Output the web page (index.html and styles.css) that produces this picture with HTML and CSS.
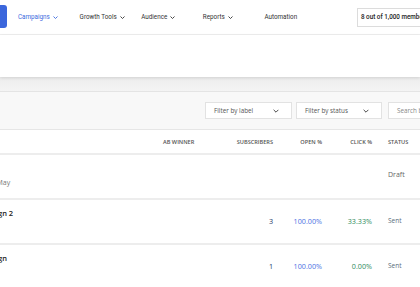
FILE: index.html
```html
<!DOCTYPE html>
<html lang="en">
<head>
<meta charset="utf-8">
<title>Campaigns</title>
<link rel="stylesheet" href="styles.css">
</head>
<body>
<header class="topnav">
  <div class="logo"></div>
  <nav class="menu">
    <a class="item active">Campaigns <svg class="caret" viewBox="0 0 10 6" width="5" height="3"><path d="M1 1l4 4 4-4" fill="none" stroke="currentColor" stroke-width="1.8"/></svg></a>
    <a class="item">Growth Tools <svg class="caret" viewBox="0 0 10 6" width="5" height="3"><path d="M1 1l4 4 4-4" fill="none" stroke="currentColor" stroke-width="1.8"/></svg></a>
    <a class="item">Audience <svg class="caret" viewBox="0 0 10 6" width="5" height="3"><path d="M1 1l4 4 4-4" fill="none" stroke="currentColor" stroke-width="1.8"/></svg></a>
    <a class="item">Reports <svg class="caret" viewBox="0 0 10 6" width="5" height="3"><path d="M1 1l4 4 4-4" fill="none" stroke="currentColor" stroke-width="1.8"/></svg></a>
    <a class="item">Automation</a>
  </nav>
  <div class="quota">8 out of 1,000 members</div>
</header>

<section class="hero"></section>
<div class="band"></div>

<div class="toolbar">
  <div class="select">Filter by label <svg class="chev" viewBox="0 0 10 6" width="6" height="4"><path d="M1 1l4 4 4-4" fill="none" stroke="#444" stroke-width="1.6"/></svg></div>
  <div class="select">Filter by status <svg class="chev" viewBox="0 0 10 6" width="6" height="4"><path d="M1 1l4 4 4-4" fill="none" stroke="#444" stroke-width="1.6"/></svg></div>
  <div class="search">Search by name</div>
</div>

<div class="table">
  <div class="row head">
    <div class="c name"></div>
    <div class="c ab">AB WINNER</div>
    <div class="c num">SUBSCRIBERS</div>
    <div class="c num">OPEN %</div>
    <div class="c num">CLICK %</div>
    <div class="c status">STATUS</div>
  </div>
  <div class="row first">
    <div class="c name"><div class="nm"><div class="title">Newsletter</div><div class="sub">Last edited 14 May</div></div></div>
    <div class="c ab"></div>
    <div class="c num"></div>
    <div class="c num"></div>
    <div class="c num"></div>
    <div class="c status draft">Draft</div>
  </div>
  <div class="row">
    <div class="c name"><div class="nm"><div class="title">Regular campaign 2</div><div class="sub">12 May</div></div></div>
    <div class="c ab"></div>
    <div class="c num subs">3</div>
    <div class="c num open">100.00%</div>
    <div class="c num click">33.33%</div>
    <div class="c status sent">Sent</div>
  </div>
  <div class="row">
    <div class="c name"><div class="nm"><div class="title">Regular campaign</div><div class="sub">10 May</div></div></div>
    <div class="c ab"></div>
    <div class="c num subs">1</div>
    <div class="c num open">100.00%</div>
    <div class="c num click">0.00%</div>
    <div class="c status sent">Sent</div>
  </div>
</div>
</body>
</html>
```

FILE: styles.css
```css
html, body {
  margin: 0;
  padding: 0;
}
body {
  width: 420px;
  height: 287px;
  overflow: hidden;
  background: #ffffff;
  font-family: "Open Sans", "Noto Sans", sans-serif;
  color: #333;
}

/* top navigation */
.topnav {
  display: flex;
  align-items: center;
  height: 34px;
  border-bottom: 1px solid #efefef;
  font-family: Roboto, "Liberation Sans", sans-serif;
}
.logo {
  flex: 0 0 auto;
  width: 30px;
  height: 23px;
  margin-left: -23px;
  margin-top: -1px;
  border-radius: 3px;
  background: #3b66dc;
}
.menu {
  display: flex;
  margin-left: 11px;
}
.item {
  flex: 0 0 61.6px;
  font-size: 6.3px;
  color: #333;
  white-space: nowrap;
  display: flex;
  align-items: center;
}
.item.active {
  color: #3d6be0;
}
.caret {
  margin-left: 3px;
  display: block;
}
.quota {
  flex: 0 0 auto;
  margin-left: 31px;
  height: 17px;
  padding: 0 3px;
  border: 1px solid #dcdcdc;
  border-right: none;
  display: flex;
  align-items: center;
  font-size: 6.3px;
  font-weight: 500;
  color: #222;
  white-space: nowrap;
}

/* hero & band */
.hero {
  height: 42px;
  background: #fff;
  position: relative;
  box-shadow: 0 1px 3px rgba(0,0,0,0.12);
}
.band {
  height: 14px;
  background: linear-gradient(#ededed, #f4f4f4);
  border-bottom: 1px solid #e4e4e4;
}

/* toolbar */
.toolbar {
  height: 37px;
  background: #f8f8f8;
  border-bottom: 1px solid #e6e6e6;
  display: flex;
  align-items: center;
  padding-left: 205px;
  gap: 4px;
  white-space: nowrap;
}
.select, .search {
  box-sizing: border-box;
  height: 17px;
  background: #fff;
  border: 1px solid #e2e2e2;
  display: flex;
  align-items: center;
  font-size: 6.3px;
  color: #555;
}
.select {
  flex: 0 0 87px;
  padding: 0 12px 0 8px;
  justify-content: space-between;
}
.select + .select {
  flex-basis: 86px;
}
.search {
  flex: 0 0 90px;
  margin-left: 2px;
  padding-left: 8px;
  color: #888;
}
.chev {
  display: block;
}

/* table */
.row {
  display: grid;
  grid-template-columns: 160px 40px 73px 49px 50px 1fr;
  height: 43px;
  border-bottom: 2px solid #ededed;
  align-items: center;
  white-space: nowrap;
}
.row.head {
  height: 23px;
  font-size: 5.6px;
  font-weight: 600;
  color: #555;
}
.c.ab {
  padding-left: 3px;
}
.c.num {
  text-align: right;
}
.c.status {
  padding-left: 16px;
}
.nm {
  margin-left: -58px;
  margin-top: -4px;
}
.row.first .nm {
  margin-left: -51px;
  margin-top: -2px;
}
.title {
  font-size: 7.5px;
  font-weight: 600;
  color: #222;
  line-height: 12px;
}
.sub {
  font-size: 7px;
  color: #777;
  line-height: 12px;
  margin-top: 2px;
}
.subs {
  font-size: 7.2px;
  color: #253a66;
  margin-top: -2px;
}
.open {
  font-size: 7.2px;
  color: #4a6fe3;
  margin-top: -2px;
}
.click {
  font-size: 7.2px;
  color: #2d8a5c;
  margin-top: -2px;
}
.sent {
  font-size: 6.5px;
  color: #5b6c7c;
  margin-top: -2px;
}
.draft {
  font-size: 7px;
  color: #666;
  margin-top: -4px;
}
```
